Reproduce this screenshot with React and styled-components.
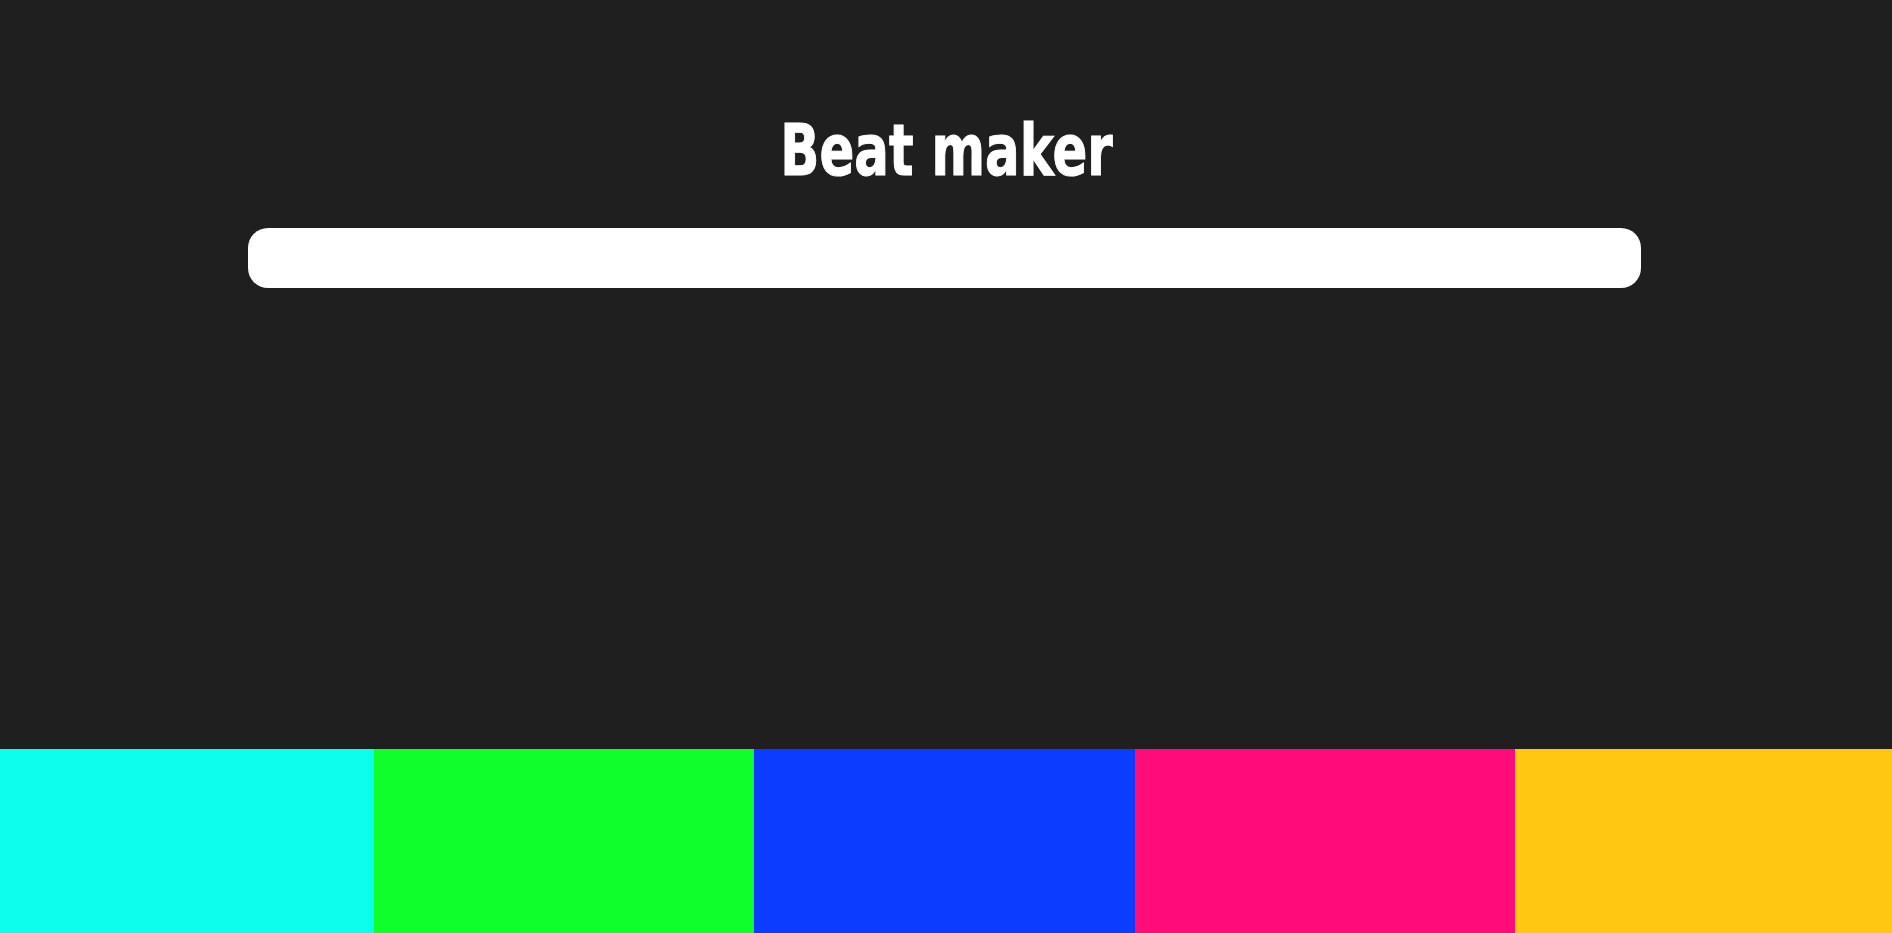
import styled, { createGlobalStyle } from 'styled-components';

const GlobalStyle = createGlobalStyle`
  html, body {
    margin: 0;
    padding: 0;
    background-color: #1f1f1f;
  }
  body {
    font-family: 'Liberation Sans', Arial, sans-serif;
  }
`;

const Page = styled.div`
  display: flex;
  flex-direction: column;
  height: 100vh;
  background-color: #1f1f1f;
  overflow: hidden;
`;

const Main = styled.main`
  flex: 1;
  display: flex;
  flex-direction: column;
  align-items: center;
  padding-top: 115px;
`;

// heavy condensed display face, squeezed to the narrow width of the original
const Title = styled.h1`
  margin: 0;
  color: white;
  font-family: 'DejaVu Sans Condensed', 'DejaVu Sans', sans-serif;
  font-weight: 700;
  font-size: 71px;
  line-height: 1;
  -webkit-text-stroke: 1px white;
  transform: scaleX(0.805);
`;

const Track = styled.div`
  margin-top: 42px;
  margin-right: 3px;
  width: 1393px;
  height: 60px;
  border-radius: 20px;
  background-color: #ffffff;
`;

const Pads = styled.div`
  display: grid;
  grid-template-columns: 374px 380px 381px 380px 1fr;
  height: 184px;
`;

const Pad = styled.button((props) => ({
  border: 'none',
  padding: 0,
  margin: 0,
  backgroundColor: props.color,
  cursor: 'pointer',
}));

const pads = ['#0dffec', '#0eff2b', '#0c3cff', '#ff0c78', '#ffc712'];

const App = () => {
  return (
    <>
      <GlobalStyle />
      <Page>
        <Main>
          <Title>Beat maker</Title>
          <Track />
        </Main>
        <Pads>
          {pads.map((c) => (
            <Pad key={c} color={c} />
          ))}
        </Pads>
      </Page>
    </>
  );
};

export default App;
